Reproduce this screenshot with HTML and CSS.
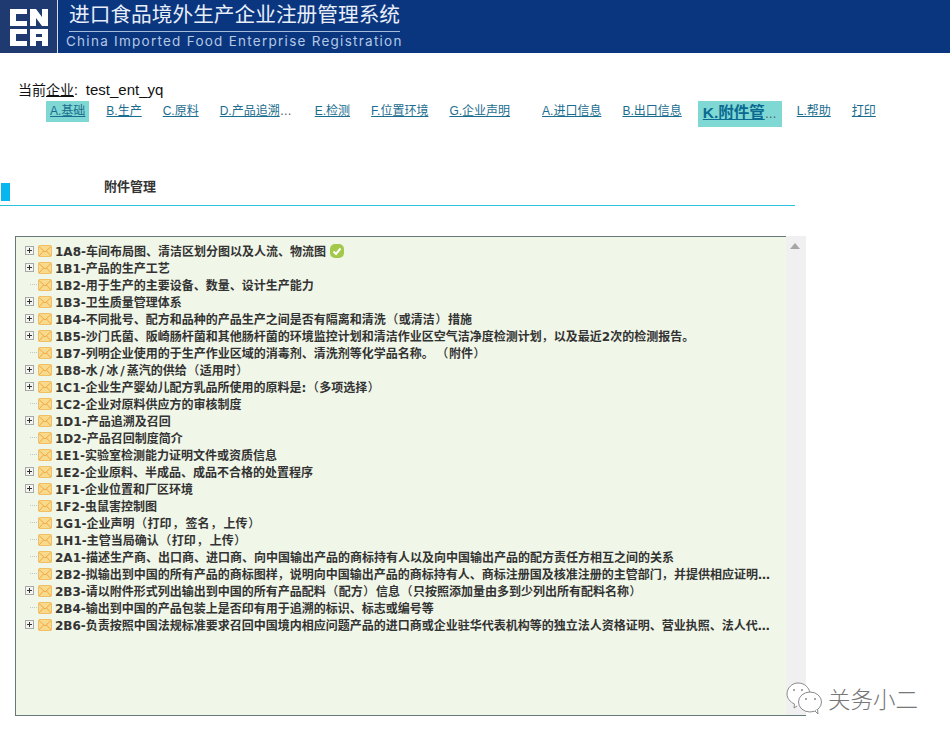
FILE: index.html
```html
<!DOCTYPE html>
<html lang="zh-CN">
<head>
<meta charset="utf-8">
<title>进口食品境外生产企业注册管理系统</title>
<link rel="stylesheet" href="styles.css">
</head>
<body>
<svg class="defs" width="0" height="0" aria-hidden="true">
  <symbol id="mail" viewBox="0 0 14 12">
    <rect x="0.5" y="0.5" width="13" height="11" rx="1" fill="#f9d98c" stroke="#f2be62"/>
    <path d="M1 1.500 7 7l6-5.500M1 11l4.500-5M13 11 8.500 6" fill="none" stroke="#eeaa45" stroke-width="1"/>
  </symbol>
  <symbol id="plus" viewBox="0 0 9 9">
    <rect x="0.5" y="0.5" width="8" height="8" fill="#f4f4f0" stroke="#a8a8a8"/>
    <path d="M2 4.500h5M4.500 2v5" stroke="#333" stroke-width="1"/>
  </symbol>
</svg>
<header class="banner">
  <div class="logo">
    <svg width="38" height="37" viewBox="0 0 38 37">
      <g fill="#fff">
        <path d="M0 0h17v5H6v7h11v5H0z"/>
        <path d="M20 0h6l6 8V0h6v17h-6l-6-8v8h-6z"/>
        <path d="M0 20h17v5H6v7h11v5H0z"/>
        <path d="M20 20h18v17h-6v-5h-6v5h-6zm6 5v3h6v-3z"/>
      </g>
    </svg>
  </div>
  <div class="brand">
    <div class="brand-cn">进口食品境外生产企业注册管理系统</div>
    <div class="brand-en">China Imported Food Enterprise Registration</div>
  </div>
</header>

<div class="current">当前<u>企业</u>: <span class="ent">test_ent_yq</span></div>

<nav>
  <ul class="tabs">
    <li class="tab on"><a href="#">A.基础</a></li>
    <li class="tab"><a href="#">B.生产</a></li>
    <li class="tab"><a href="#">C.原料</a></li>
    <li class="tab wide"><a href="#">D.产品追溯</a><span class="more">…</span></li>
    <li class="tab"><a href="#">E.检测</a></li>
    <li class="tab"><a href="#">F.位置环境</a></li>
    <li class="tab"><a href="#">G.企业声明</a></li>
    <li class="tab far"><a href="#">A.进口信息</a></li>
    <li class="tab"><a href="#">B.出口信息</a></li>
    <li class="tab big"><a href="#">K.附件管</a><span class="more">…</span></li>
    <li class="tab"><a href="#">L.帮助</a></li>
    <li class="tab"><a href="#">打印</a></li>
  </ul>
</nav>

<section class="heading">
  <span class="mark"></span>
  <h2>附件管理</h2>
</section>

<section class="panel">
  <ul class="tree">
    <li><svg class="plus"><use href="#plus"/></svg><svg class="mail"><use href="#mail"/></svg><span class="label">1A8-车间布局图、清洁区划分图以及人流、物流图</span><svg class="ok" viewBox="0 0 14 14"><rect width="14" height="14" rx="5" fill="#a3c94a"/><path d="M3.500 7.500 6 10l4.500-5.500" fill="none" stroke="#fff" stroke-width="2"/></svg></li>
    <li><svg class="plus"><use href="#plus"/></svg><svg class="mail"><use href="#mail"/></svg><span class="label">1B1-产品的生产工艺</span></li>
    <li><i class="leaf"></i><svg class="mail"><use href="#mail"/></svg><span class="label">1B2-用于生产的主要设备、数量、设计生产能力</span></li>
    <li><svg class="plus"><use href="#plus"/></svg><svg class="mail"><use href="#mail"/></svg><span class="label">1B3-卫生质量管理体系</span></li>
    <li><svg class="plus"><use href="#plus"/></svg><svg class="mail"><use href="#mail"/></svg><span class="label">1B4-不同批号、配方和品种的产品生产之间是否有隔离和清洗<span class="p">（</span>或清洁<span class="p">）</span>措施</span></li>
    <li><svg class="plus"><use href="#plus"/></svg><svg class="mail"><use href="#mail"/></svg><span class="label">1B5-沙门氏菌、阪崎肠杆菌和其他肠杆菌的环境监控计划和清洁作业区空气洁净度检测计划<span class="p flat">，</span>以及最近2次的检测报告。</span></li>
    <li><i class="leaf"></i><svg class="mail"><use href="#mail"/></svg><span class="label">1B7-列明企业使用的于生产作业区域的消毒剂、清洗剂等化学品名称<span class="stop">。</span><span class="p">（</span>附件<span class="p">）</span></span></li>
    <li><svg class="plus"><use href="#plus"/></svg><svg class="mail"><use href="#mail"/></svg><span class="label">1B8-水<span class="sl">/</span>冰<span class="sl">/</span>蒸汽的供给<span class="p">（</span>适用时<span class="p">）</span></span></li>
    <li><svg class="plus"><use href="#plus"/></svg><svg class="mail"><use href="#mail"/></svg><span class="label">1C1-企业生产婴幼儿配方乳品所使用的原料是:<span class="p">（</span>多项选择<span class="p">）</span></span></li>
    <li><i class="leaf"></i><svg class="mail"><use href="#mail"/></svg><span class="label">1C2-企业对原料供应方的审核制度</span></li>
    <li><svg class="plus"><use href="#plus"/></svg><svg class="mail"><use href="#mail"/></svg><span class="label">1D1-产品追溯及召回</span></li>
    <li><i class="leaf"></i><svg class="mail"><use href="#mail"/></svg><span class="label">1D2-产品召回制度简介</span></li>
    <li><i class="leaf"></i><svg class="mail"><use href="#mail"/></svg><span class="label">1E1-实验室检测能力证明文件或资质信息</span></li>
    <li><svg class="plus"><use href="#plus"/></svg><svg class="mail"><use href="#mail"/></svg><span class="label">1E2-企业原料、半成品、成品不合格的处置程序</span></li>
    <li><svg class="plus"><use href="#plus"/></svg><svg class="mail"><use href="#mail"/></svg><span class="label">1F1-企业位置和厂区环境</span></li>
    <li><i class="leaf"></i><svg class="mail"><use href="#mail"/></svg><span class="label">1F2-虫鼠害控制图</span></li>
    <li><i class="leaf"></i><svg class="mail"><use href="#mail"/></svg><span class="label">1G1-企业声明<span class="p">（</span>打印<span class="p comma">，</span>签名<span class="p comma">，</span>上传<span class="p">）</span></span></li>
    <li><i class="leaf"></i><svg class="mail"><use href="#mail"/></svg><span class="label">1H1-主管当局确认<span class="p">（</span>打印<span class="p comma">，</span>上传<span class="p">）</span></span></li>
    <li><i class="leaf"></i><svg class="mail"><use href="#mail"/></svg><span class="label">2A1-描述生产商、出口商、进口商、向中国输出产品的商标持有人以及向中国输出产品的配方责任方相互之间的关系</span></li>
    <li><i class="leaf"></i><svg class="mail"><use href="#mail"/></svg><span class="label">2B2-拟输出到中国的所有产品的商标图样<span class="p flat">，</span>说明向中国输出产品的商标持有人、商标注册国及核准注册的主管部门<span class="p flat">，</span>并提供相应证明…</span></li>
    <li><svg class="plus"><use href="#plus"/></svg><svg class="mail"><use href="#mail"/></svg><span class="label">2B3-请以附件形式列出输出到中国的所有产品配料<span class="p">（</span>配方<span class="p">）</span>信息<span class="p">（</span>只按照添加量由多到少列出所有配料名称<span class="p">）</span></span></li>
    <li><i class="leaf"></i><svg class="mail"><use href="#mail"/></svg><span class="label">2B4-输出到中国的产品包装上是否印有用于追溯的标识、标志或编号等</span></li>
    <li><svg class="plus"><use href="#plus"/></svg><svg class="mail"><use href="#mail"/></svg><span class="label">2B6-负责按照中国法规标准要求召回中国境内相应问题产品的进口商或企业驻华代表机构等的独立法人资格证明、营业执照、法人代…</span></li>
  </ul>
  <div class="scrollbar"><span class="arrow"></span></div>
</section>

<aside class="stamp">
  <svg width="36" height="33" viewBox="0 0 36 33">
    <path d="M11 24l-3 2 .5-4C4 20 1 16 1 12 1 6 6 1 12 1s11 4 12 10" fill="#fff" stroke="#8a8a8a"/>
    <ellipse cx="24" cy="20" rx="11.500" ry="10" fill="#fff" stroke="#8a8a8a"/>
    <path d="M29 29l3 3-.5-5" fill="#fff" stroke="#8a8a8a"/>
    <circle cx="8" cy="8" r="1" fill="#8a8a8a"/><circle cx="16" cy="8" r="1" fill="#8a8a8a"/>
    <circle cx="20" cy="17" r="1" fill="#8a8a8a"/><circle cx="29" cy="17" r="1" fill="#8a8a8a"/>
  </svg>
  <span class="stamp-name">关务小二</span>
</aside>
</body>
</html>
```
FILE: styles.css
```css
* { box-sizing: border-box; }
html, body { margin: 0; padding: 0; }
body {
  width: 950px;
  height: 739px;
  overflow: hidden;
  position: relative;
  background: #fff;
  font-family: "Liberation Sans", "Noto Sans CJK SC", sans-serif;
  font-size: 12px;
  color: #222;
}
.defs { position: absolute; }

.banner { display: flex; height: 53px; background: #0a3680; }
.logo {
  width: 58px;
  padding: 9px 0 0 10px;
  background: #1f3a70;
  border-right: 1px solid #d5dcea;
}
.logo svg { display: block; }
.brand { width: 345px; padding: 2px 0 0 8px; color: #e8eef8; }
.brand-cn {
  margin-left: 3px;
  width: 331px;
  height: 30px;
  font-size: 20.7px;
  line-height: 26px;
  white-space: nowrap;
  border-bottom: 1px solid #a8bcdc;
}
.brand-en {
  font-family: Inter, "Liberation Sans", sans-serif;
  font-size: 13.500px;
  line-height: 18px;
  letter-spacing: 1.260px;
  white-space: nowrap;
  color: #b5c8e4;
}

.current {
  margin: 28px 0 0 18px;
  font-size: 14px;
  line-height: 18px;
  color: #111;
}
.ent { font-size: 15px; margin-left: 4px; }

.tabs {
  display: flex;
  align-items: flex-start;
  gap: 13px;
  margin: 2px 0 0 46px;
  padding: 0;
  list-style: none;
  height: 26px;
}
.tab { padding: 0 4px; height: 21px; line-height: 20px; white-space: nowrap; }
.tab a { color: #1a6d8e; text-decoration: underline; }
.tab.on { background: #7fd8d4; }
.tab.wide { margin-right: 2px; }
.tab.far { margin-left: 11px; }
.tab.big {
  width: 84px;
  height: 26px;
  margin: 0 -2px 0 -1px;
  padding: 0 5px;
  background: #7fd8d4;
  line-height: 24px;
  font-size: 15.500px;
  font-weight: 700;
}
.tab.big a { color: #0a6a90; }
.more { color: #555; font-size: 12px; font-weight: 400; }

.heading { position: relative; margin-top: 25px; height: 54px; width: 795px; border-bottom: 1px solid #2cc3e0; }
.mark { position: absolute; left: 1px; top: 31px; width: 9px; height: 18px; background: #07b6ee; }
.heading h2 {
  margin: 0;
  padding: 26px 0 0 104px;
  font-size: 13px;
  line-height: 18px;
  font-weight: 700;
  color: #333;
}

.panel {
  display: flex;
  margin: 30px 0 0 15px;
  width: 791px;
  height: 480px;
  border: 1px solid #667878;
  border-right: 0;
  background: #f0f6e8;
}
.tree {
  flex: 1;
  min-width: 0;
  margin: 0;
  padding: 5px 0 0 9px;
  list-style: none;
}
.tree li {
  display: flex;
  align-items: center;
  height: 17px;
  font-family: "DejaVu Sans", "Noto Sans CJK SC", sans-serif;
  font-size: 12px;
  font-weight: 700;
  color: #333;
}
.plus { width: 9px; height: 9px; flex: none; margin-right: 4px; }
.leaf { width: 9px; height: 9px; flex: none; margin-right: 4px; border-bottom: 1px dotted #c4c8bc; transform: translate(5px, -4px); }
.mail { width: 14px; height: 12px; flex: none; margin-right: 3px; }
.label { white-space: nowrap; }
.p { font-family: "Noto Sans CJK TC", sans-serif; font-weight: 500; padding: 0 .5px; }
.p.comma { padding: 0 1px; }
.p.flat { padding: 0; }
.stop { margin-right: 8px; }
.sl { padding: 0 2px; }
.ok { width: 14px; height: 14px; flex: none; margin-left: 4px; }

.scrollbar { flex: none; width: 20px; margin-top: -1px; background: #f0f0f0; position: relative; }
.arrow {
  position: absolute;
  left: 4px;
  top: 7px;
  border: 5px solid transparent;
  border-top: 0;
  border-bottom: 6px solid #a6a6a6;
}

.stamp {
  position: absolute;
  left: 786px;
  top: 680px;
  width: 164px;
  height: 36px;
  display: flex;
  align-items: center;
  gap: 6px;
}
.stamp-name {
  font-family: "Noto Sans CJK SC", sans-serif;
  font-weight: 300;
  font-size: 22.500px;
  line-height: 30px;
  color: #777;
  background: #fff;
}
```
